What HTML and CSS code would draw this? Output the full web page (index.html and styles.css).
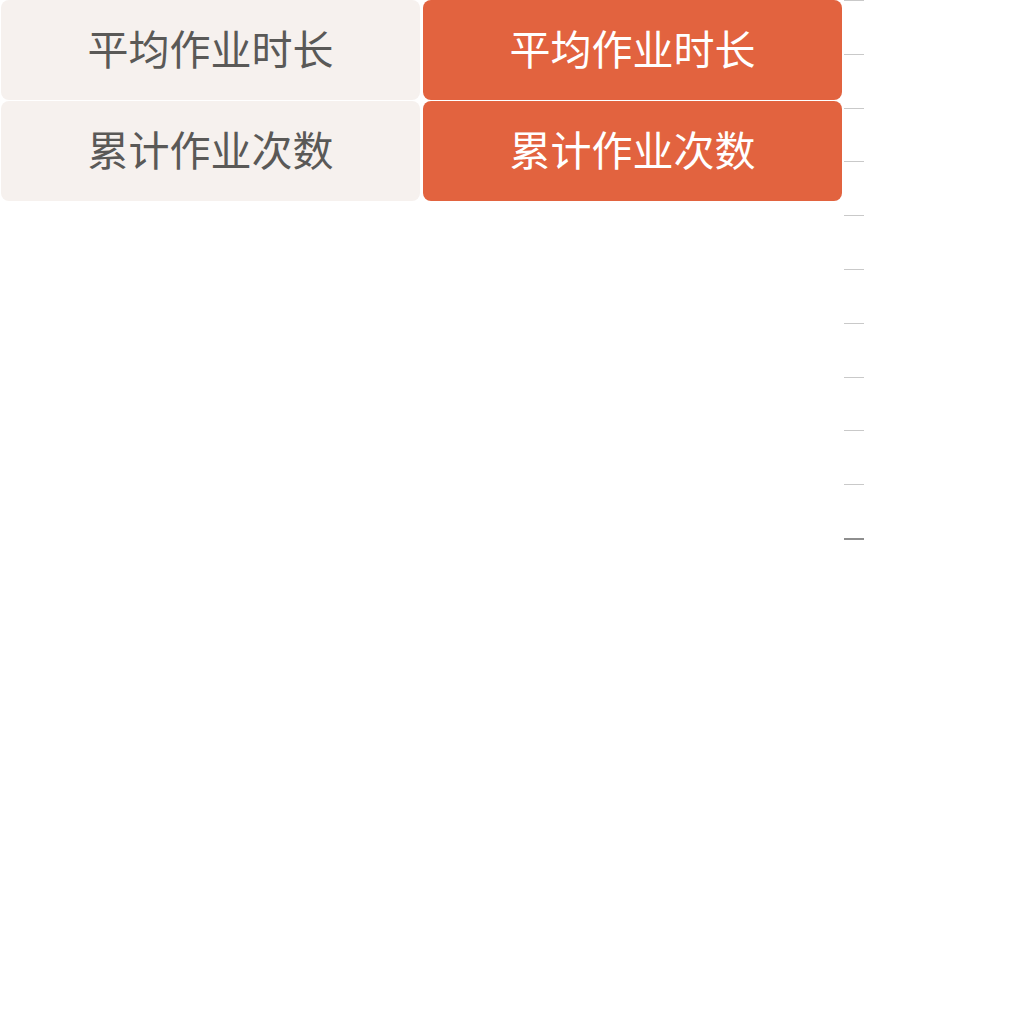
FILE: index.html
```html
<!DOCTYPE html>
<html lang="zh">
<head>
<meta charset="utf-8">
<link rel="stylesheet" href="styles.css">
</head>
<body>
<div class="page">
  <div class="grid">
    <div class="btn btn-light">平均作业时长</div>
    <div class="btn btn-accent">平均作业时长</div>
    <div class="btn btn-light">累计作业次数</div>
    <div class="btn btn-accent">累计作业次数</div>
  </div>
  <div class="ticks">
    <div class="tick"></div>
    <div class="tick"></div>
    <div class="tick"></div>
    <div class="tick"></div>
    <div class="tick"></div>
    <div class="tick"></div>
    <div class="tick"></div>
    <div class="tick"></div>
    <div class="tick"></div>
    <div class="tick"></div>
    <div class="tick tick-strong"></div>
  </div>
</div>
</body>
</html>
```
FILE: styles.css
```css
html, body {
  margin: 0;
  padding: 0;
  background: #ffffff;
}
.page {
  display: flex;
  align-items: flex-start;
  padding-left: 1px;
  font-family: "Noto Sans CJK SC", "Noto Sans", sans-serif;
}
.grid {
  display: grid;
  grid-template-columns: 419px 419px;
  grid-auto-rows: 100px;
  column-gap: 3px;
  row-gap: 1px;
}
.btn {
  display: flex;
  align-items: center;
  justify-content: center;
  border-radius: 8px;
  font-size: 41px;
  font-weight: 400;
  line-height: 1;
  padding-bottom: 5px;
  box-sizing: border-box;
}
.btn-light {
  background: #f6f1ee;
  color: #5a5957;
}
.btn-accent {
  background: #e2633f;
  color: #ffffff;
}
.ticks {
  margin-left: 2px;
  width: 20px;
  display: flex;
  flex-direction: column;
  gap: 52.8px;
}
.tick {
  height: 1px;
  background: #c9c9c9;
}
.tick-strong {
  height: 2px;
  background: #8e8e8e;
}
```
